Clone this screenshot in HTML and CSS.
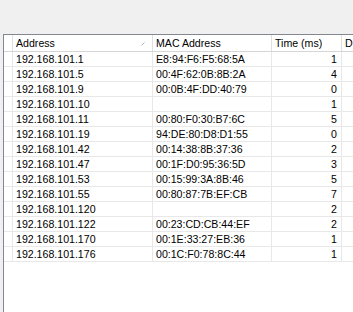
FILE: index.html
```html
<!DOCTYPE html>
<html lang="en">
<head>
    <meta charset="UTF-8">
    <title>Scan Results</title>
    <link rel="stylesheet" href="styles.css">
</head>
<body>
    <div id="toolbar"></div>

    <div id="resultList">
        <div class="row header">
            <div class="cell"></div>
            <div class="cell sorted">Address
                <svg class="sortMark" width="4" height="4" viewBox="0 0 4 4"><path d="M0.5 3.5 L3.5 0.5" stroke="#b4b4b4" stroke-width="1"/></svg>
            </div>
            <div class="cell">MAC Address</div>
            <div class="cell">Time (ms)</div>
            <div class="cell">DNS</div>
        </div>

        <div id="rows"></div>
    </div>

    <script>
        // Ping results
        const results = [
            ['192.168.101.1', 'E8:94:F6:F5:68:5A', 1],
            ['192.168.101.5', '00:4F:62:0B:8B:2A', 4],
            ['192.168.101.9', '00:0B:4F:DD:40:79', 0],
            ['192.168.101.10', '', 1],
            ['192.168.101.11', '00:80:F0:30:B7:6C', 5],
            ['192.168.101.19', '94:DE:80:D8:D1:55', 0],
            ['192.168.101.42', '00:14:38:8B:37:36', 2],
            ['192.168.101.47', '00:1F:D0:95:36:5D', 3],
            ['192.168.101.53', '00:15:99:3A:8B:46', 5],
            ['192.168.101.55', '00:80:87:7B:EF:CB', 7],
            ['192.168.101.120', '', 2],
            ['192.168.101.122', '00:23:CD:CB:44:EF', 2],
            ['192.168.101.170', '00:1E:33:27:EB:36', 1],
            ['192.168.101.176', '00:1C:F0:78:8C:44', 1]
        ];

        const rowsDiv = document.getElementById('rows');
        results.forEach(r => {
            const row = document.createElement('div');
            row.className = 'row';
            row.innerHTML =
                '<div class="cell"></div>' +
                '<div class="cell">' + r[0] + '</div>' +
                '<div class="cell">' + r[1] + '</div>' +
                '<div class="cell num">' + r[2] + '</div>' +
                '<div class="cell"></div>';
            rowsDiv.appendChild(row);
        });
    </script>
</body>
</html>
```

FILE: styles.css
```css
html, body {
    margin: 0;
    height: 100%;
    overflow: hidden;
}
body {
    font-family: "Liberation Sans", Arial, sans-serif;
    font-size: 10.6px;
    color: #000;
    background-color: #f0f0f0;
}
#toolbar {
    height: 34px;
}
#resultList {
    margin-left: 3px;
    width: 420px;
    height: 400px;
    background-color: #fff;
    border-top: 1px solid #828790;
    border-left: 1px solid #828790;
}
.row {
    display: grid;
    grid-template-columns: 9px 140px 119px 70px 1fr;
    height: 15px;
    box-sizing: border-box;
    border-bottom: 1px solid #e8e8e8;
}
.cell {
    box-sizing: border-box;
    border-right: 1px solid #e8e8e8;
    padding: 0 3px;
    line-height: 14px;
    white-space: nowrap;
    overflow: hidden;
}
.cell.num {
    text-align: right;
    padding-right: 4px;
}
.header {
    height: 17px;
    border-bottom: 1px solid #d5d5d5;
}
.header .cell {
    line-height: 16px;
    border-right-color: #e0e0e0;
}
.sorted {
    position: relative;
}
.sortMark {
    position: absolute;
    right: 7px;
    top: 7px;
}
```
